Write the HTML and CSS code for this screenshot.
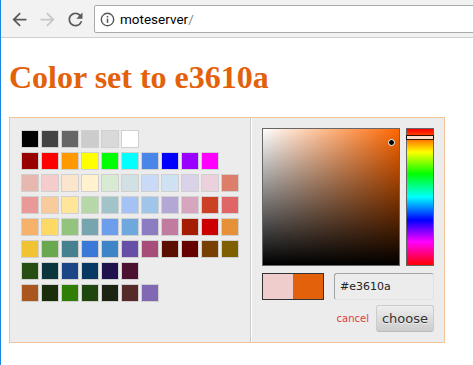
FILE: index.html
```html
<!DOCTYPE html>
<html lang="en">

<head>
  <meta charset="UTF-8" />
  <title>moteserver</title>
  <link rel="stylesheet" href="styles.css">
</head>

<body>
  <div class="edge"></div>
  <div class="window">

    <!-- browser toolbar -->
    <div class="toolbar">
      <span class="nav-btn">
        <svg width="21" height="21" viewBox="0 0 24 24"><path d="M20 11H7.83l5.59-5.59L12 4l-8 8 8 8 1.41-1.41L7.83 13H20v-2z" /></svg>
      </span>
      <span class="nav-btn nav-off">
        <svg width="21" height="21" viewBox="0 0 24 24"><path d="M4 11h12.17l-5.59-5.59L12 4l8 8-8 8-1.41-1.41L16.17 13H4v-2z" /></svg>
      </span>
      <span class="nav-btn">
        <svg width="21" height="21" viewBox="0 0 24 24"><path d="M17.65 6.35A7.96 7.96 0 0 0 12 4c-4.42 0-7.990 3.58-7.99 8s3.57 8 7.99 8c3.73 0 6.84-2.55 7.73-6h-2.08A5.99 5.99 0 0 1 12 18c-3.31 0-6-2.69-6-6s2.69-6 6-6c1.66 0 3.14.69 4.22 1.78L13 11h7V4l-2.35 2.35z" /></svg>
      </span>
      <div class="omnibox">
        <svg class="info" width="15" height="15" viewBox="0 0 16 16">
          <circle cx="8" cy="8" r="6.6" fill="none" stroke="#555" stroke-width="1.5" />
          <rect x="7.2" y="7" width="1.6" height="4.6" fill="#555" />
          <rect x="7.2" y="4.2" width="1.6" height="1.6" fill="#555" />
        </svg>
        <span class="url">moteserver<span class="url-slash">/</span></span>
      </div>
    </div>

    <div class="page">
      <h1>Color set to e3610a</h1>

      <div class="sp-container">
        <div class="sp-palette-container">
          <div class="sp-palette" id="palette"></div>
        </div>

        <div class="sp-picker-container">
          <div class="sp-top">
            <div class="sp-color">
              <span class="sp-dragger" style="left: 125px; top: 10px;"></span>
            </div>
            <div class="sp-hue">
              <span class="sp-slider" style="top: 6px;"></span>
            </div>
          </div>

          <div class="sp-input-row">
            <div class="sp-initial">
              <span style="background: #efcdcd;"></span>
              <span style="background: #e3610a;"></span>
            </div>
            <input class="sp-input" value="#e3610a" />
          </div>

          <div class="sp-button-container">
            <a class="sp-cancel" href="#">cancel</a>
            <button class="sp-choose">choose</button>
          </div>
        </div>
      </div>
    </div>
  </div>

  <script>
    const filas = [
      ['000000', '434343', '666666', 'cccccc', 'd9d9d9', 'ffffff'],
      ['980000', 'ff0000', 'ff9900', 'ffff00', '00ff00', '00ffff', '4a86e8', '0000ff', '9900ff', 'ff00ff'],
      ['e6b8af', 'f4cccc', 'fce5cd', 'fff2cc', 'd9ead3', 'd0e0e3', 'c9daf8', 'cfe2f3', 'd9d2e9', 'ead1dc', 'dd7e6b'],
      ['ea9999', 'f9cb9c', 'ffe599', 'b6d7a8', 'a2c4c9', 'a4c2f4', '9fc5e8', 'b4a7d6', 'd5a6bd', 'cc4125', 'e06666'],
      ['f6b26b', 'ffd966', '93c47d', '76a5af', '6d9eeb', '6fa8dc', '8e7cc3', 'c27ba0', 'a61c00', 'cc0000', 'e69138'],
      ['f1c232', '6aa84f', '45818e', '3c78d8', '3d85c6', '674ea7', 'a64d79', '5b0f00', '660000', '783f04', '7f6000'],
      ['274e13', '0c343d', '1c4587', '073763', '20124d', '4c1130'],
      ['a9561f', '1a2e0b', '2f7f07', '1f470d', '1a2314', '572a2a', '8068b3']
    ];

    const palette = document.getElementById('palette');
    filas.forEach((fila) => {
      const row = document.createElement('div');
      row.className = 'sp-row';
      fila.forEach((hex) => {
        const el = document.createElement('span');
        el.className = 'sp-thumb';
        el.style.background = '#' + hex;
        row.appendChild(el);
      });
      palette.appendChild(row);
    });
  </script>
</body>

</html>
```

FILE: styles.css
```css
body {
  margin: 0;
  display: flex;
  min-height: 365px;
  background: #fff;
}

.edge {
  width: 1px;
  background: #1a88e2;
}

.window {
  flex: 1;
  overflow: hidden;
}

/* toolbar */

.toolbar {
  height: 36px;
  padding: 1px 0 0 4px;
  background: #f2f2f2;
  border-bottom: 1px solid #cfcfcf;
  display: flex;
  align-items: center;
}

.nav-btn {
  width: 28px;
  display: flex;
  justify-content: center;
  fill: #5a5a5a;
}

.nav-off {
  fill: #c6c6c6;
}

.omnibox {
  flex: 1;
  margin-left: 5px;
  margin-right: -6px;
  height: 26px;
  background: #fff;
  border: 1px solid #a9a9a9;
  border-radius: 2px;
  display: flex;
  align-items: center;
  padding-left: 5px;
}

.info {
  margin-right: 5px;
}

.url {
  font-family: Roboto, sans-serif;
  font-size: 13.5px;
  color: #000;
}

.url-slash {
  color: #888;
}

/* page */

.page {
  padding: 0 8px;
}

h1 {
  font-family: "Liberation Serif", serif;
  font-size: 32px;
  font-weight: bold;
  color: #e3610a;
  margin: 21px 0;
}

/* color picker */

.sp-container {
  display: flex;
  width: 434px;
  background: #ececec;
  border: 1px solid #f3c49a;
  font-family: "DejaVu Sans", Verdana, sans-serif;
}

.sp-palette-container {
  padding: 10px;
  border-right: 1px solid #ccc;
  width: 220px;
}

.sp-row {
  display: flex;
  height: 22px;
}

.sp-thumb {
  width: 16px;
  height: 16px;
  margin: 2px 1px;
  border: 1px solid #d0d0d0;
}

.sp-picker-container {
  width: 172px;
  padding: 10px;
  border-left: 1px solid #fff;
}

.sp-top {
  display: flex;
  justify-content: space-between;
  height: 138px;
}

.sp-color {
  position: relative;
  width: 138px;
  border: 1px solid #666;
  box-sizing: border-box;
  background:
    linear-gradient(to top, #000, rgba(0, 0, 0, 0)),
    linear-gradient(to right, #fff, rgba(255, 255, 255, 0)),
    #ff6600;
}

.sp-dragger {
  position: absolute;
  width: 5px;
  height: 5px;
  border: 1px solid #fff;
  border-radius: 5px;
  background: #000;
}

.sp-hue {
  position: relative;
  width: 28px;
  border: 1px solid #666;
  box-sizing: border-box;
  background: linear-gradient(to bottom, #ff0000 0%, #ffff00 17%, #00ff00 33%, #00ffff 50%, #0000ff 67%, #ff00ff 83%, #ff0000 100%);
}

.sp-slider {
  position: absolute;
  left: -1px;
  right: -1px;
  height: 3px;
  border: 1px solid #000;
  background: #fff;
  opacity: 0.8;
}

.sp-input-row {
  display: flex;
  justify-content: space-between;
  margin-top: 7px;
}

.sp-initial {
  display: flex;
  border: 1px solid #333;
}

.sp-initial span {
  width: 30px;
  height: 25px;
}

.sp-input {
  width: 100px;
  height: 27px;
  box-sizing: border-box;
  margin: 0;
  padding: 4px 5px;
  font-family: "DejaVu Sans", Verdana, sans-serif;
  font-size: 11px;
  color: #222;
  background: transparent;
  border: 1px solid;
  border-color: #a3a3a3 #e2e2e2 #e2e2e2 #a3a3a3;
  border-radius: 3px;
}

.sp-button-container {
  display: flex;
  justify-content: flex-end;
  align-items: center;
  margin-top: 5px;
}

.sp-cancel {
  font-size: 10px;
  color: #d93f3f;
  text-decoration: none;
  padding: 2px;
  margin-right: 5px;
}

.sp-choose {
  width: 58px;
  height: 27px;
  padding: 0;
  font-family: "DejaVu Sans", Verdana, sans-serif;
  font-size: 13px;
  color: #333;
  background: linear-gradient(to bottom, #eeeeee, #cccccc);
  border: 1px solid #ccc;
  border-bottom-color: #bbb;
  border-radius: 3px;
  text-shadow: 0 1px 0 #eee;
}
```
